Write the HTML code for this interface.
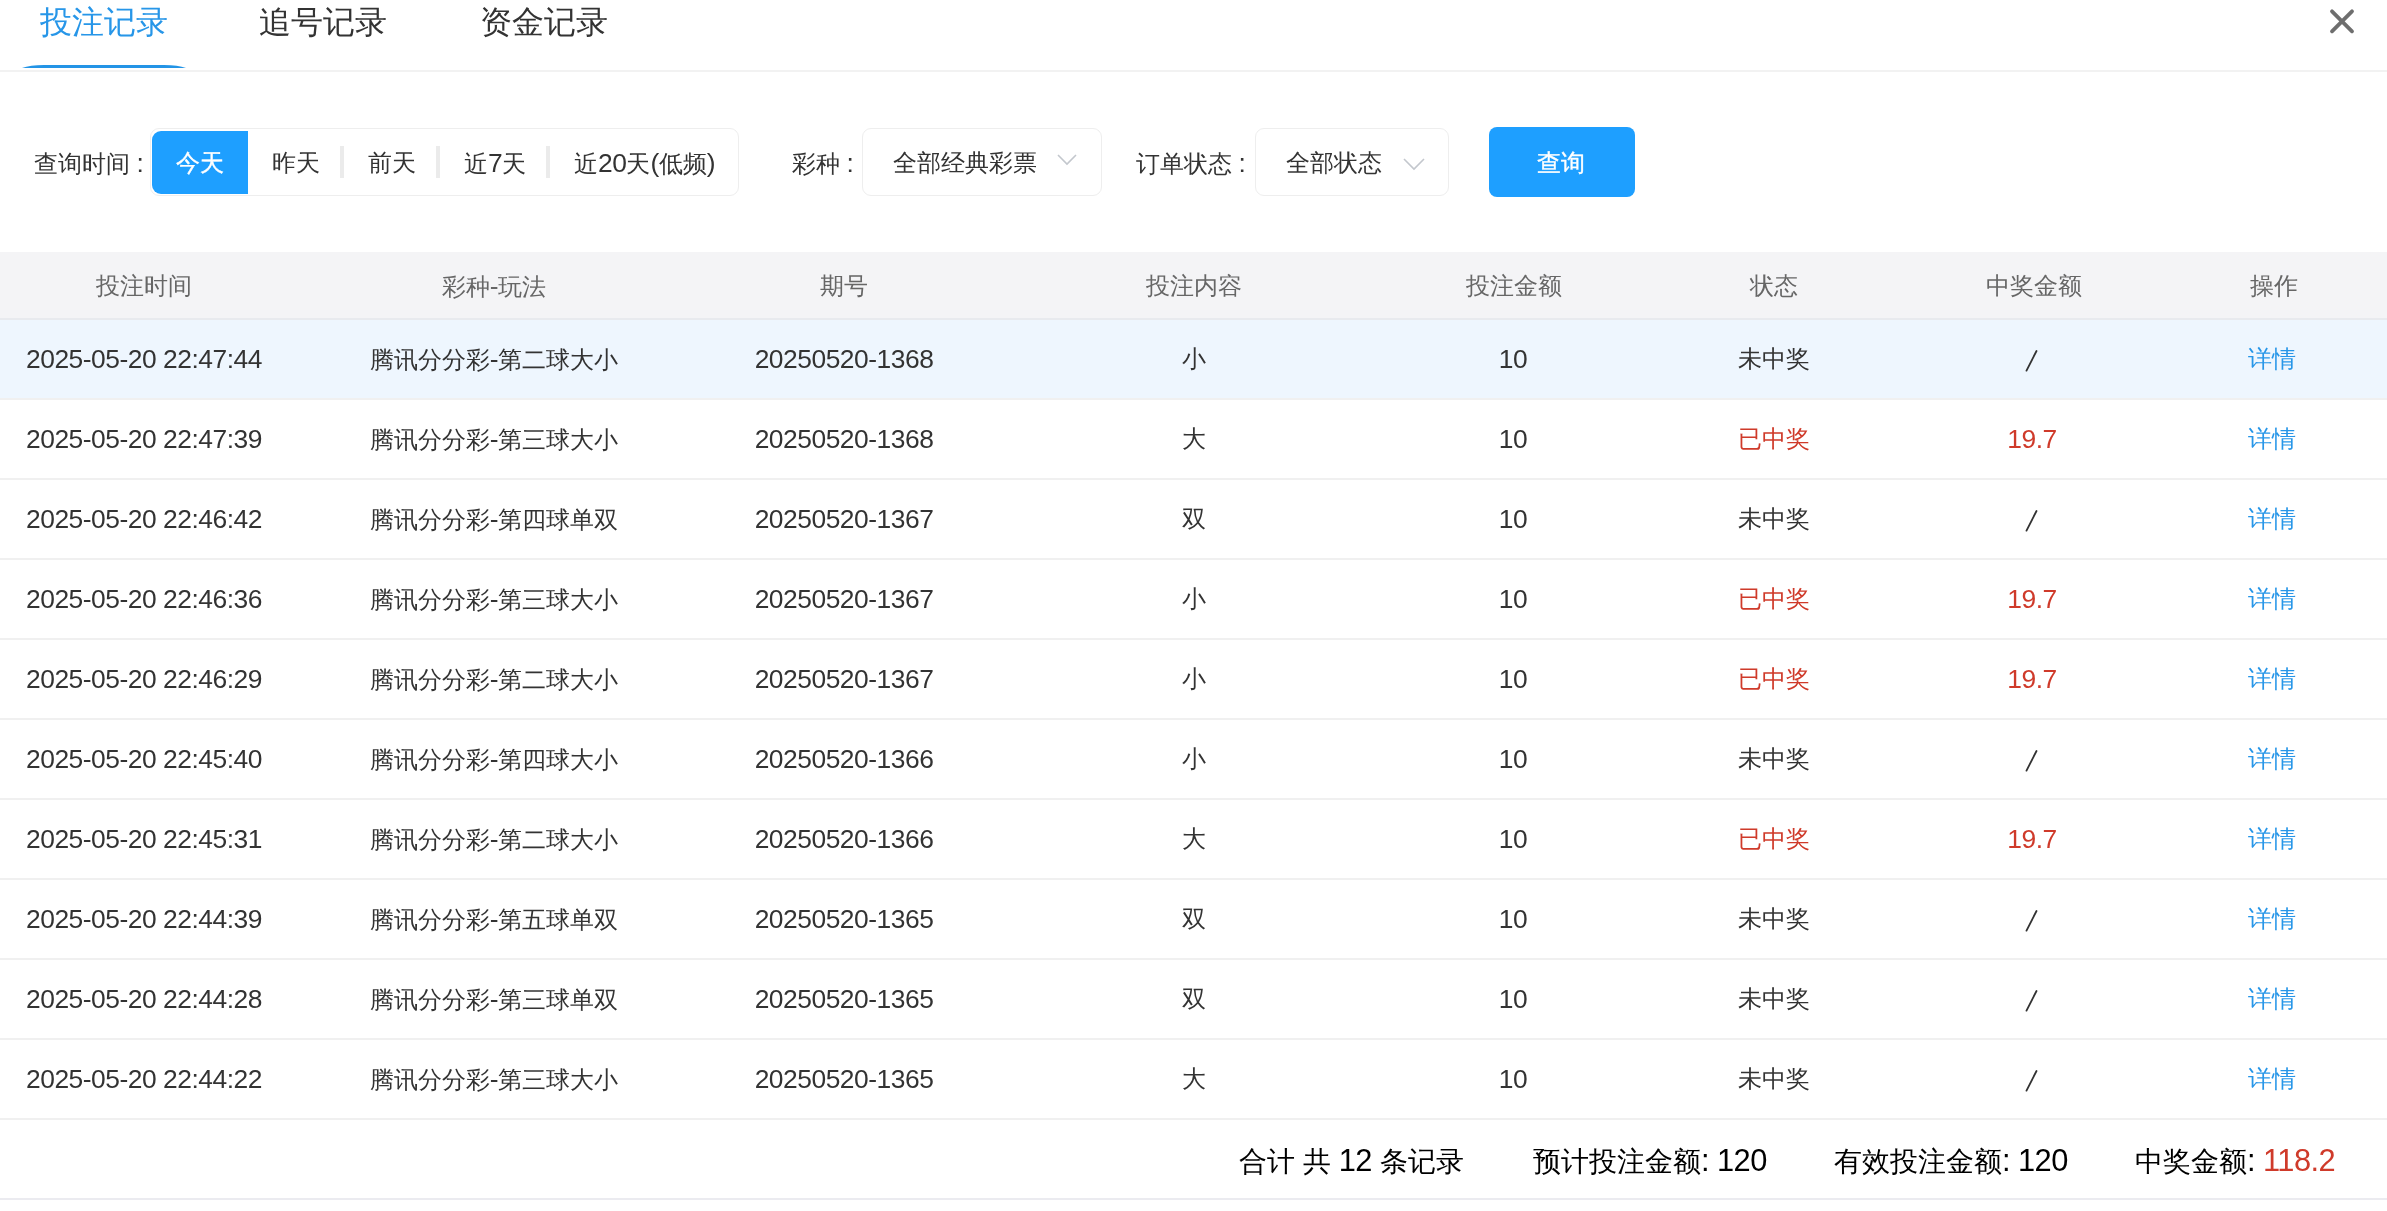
<!DOCTYPE html>
<html><head><meta charset="utf-8">
<style>
*{margin:0;padding:0;box-sizing:border-box}
html,body{width:2387px;height:1211px;overflow:hidden;background:#fff}
body{font-family:"Liberation Sans",sans-serif;color:#333;position:relative;will-change:transform}
.a{position:absolute;white-space:nowrap}
.n{font-size:1.1em;letter-spacing:-0.018em}
.tab{font-size:32px;line-height:40px;top:2px}
.lbl{font-size:24px;line-height:30px;top:148px;color:#333}
.box{position:absolute;border:1px solid #eeeeee;border-radius:9px;background:#fff}
.sep{position:absolute;width:4px;top:146px;height:32px;background:#ebebeb}
.hline{position:absolute;left:0;width:2387px;height:2px}
.c{position:absolute;width:400px;text-align:center;font-size:24px;line-height:30px;white-space:nowrap}
.th{color:#666}
.red{color:#cf3a2a}
.blue{color:#2796e8}
.ft{font-size:28px;line-height:34px;color:#000;top:1144px}
</style></head><body>
<div class="a tab" style="left:40px;color:#2796e8">投注记录</div>
<div class="a tab" style="left:259px">追号记录</div>
<div class="a tab" style="left:480px">资金记录</div>
<svg class="a" style="left:0;top:0" width="2387" height="80">
  <path d="M22 68 Q30 65 44 65 L164 65 Q178 65 186 68 Z" fill="#2394e6"/>
  <rect x="0" y="70" width="2387" height="2" fill="#f2f2f2"/>
  <path d="M2332 11.3 L2352 31.3 M2352 11.3 L2332 31.3" stroke="#6e6e6e" stroke-width="3.8" stroke-linecap="round"/>
</svg>
<div class="a lbl" style="left:34px">查询时间<span class="n" style="margin-left:6.5px">:</span></div>
<div class="box" style="left:150px;top:128px;width:589px;height:68px"></div>
<div class="a" style="left:152px;top:131px;width:96px;height:63px;background:#1e9fff;border-radius:9px 0 0 9px"></div>
<div class="a lbl" style="left:176px;color:#fff;-webkit-text-stroke:0.35px #fff">今天</div>
<div class="a lbl" style="left:272px">昨天</div>
<div class="sep" style="left:340px"></div>
<div class="a lbl" style="left:368px">前天</div>
<div class="sep" style="left:436px"></div>
<div class="a lbl" style="left:464px">近<span class="n">7</span>天</div>
<div class="sep" style="left:546px"></div>
<div class="a lbl" style="left:574px">近<span class="n">20</span>天<span class="n">(</span>低频<span class="n">)</span></div>
<div class="a lbl" style="left:792px">彩种<span class="n" style="margin-left:6.5px">:</span></div>
<div class="box" style="left:862px;top:128px;width:240px;height:68px"></div>
<div class="a lbl" style="left:893px">全部经典彩票</div>
<svg class="a" style="left:1056px;top:153px" width="22" height="14"><path d="M2 2 L11 11 L20 2" fill="none" stroke="#c3c7cd" stroke-width="1.6"/></svg>
<div class="a lbl" style="left:1136px">订单状态<span class="n" style="margin-left:6.5px">:</span></div>
<div class="box" style="left:1255px;top:128px;width:194px;height:68px"></div>
<div class="a lbl" style="left:1286px">全部状态</div>
<svg class="a" style="left:1402px;top:157px" width="24" height="15"><path d="M2 2 L12 12 L22 2" fill="none" stroke="#c3c7cd" stroke-width="1.6"/></svg>
<div class="a" style="left:1489px;top:127px;width:146px;height:70px;background:#1e9fff;border-radius:8px"></div>
<div class="a lbl" style="left:1537px;color:#fff;-webkit-text-stroke:0.35px #fff">查询</div>
<div class="a" style="left:0;top:252px;width:2387px;height:66px;background:#f4f4f6"></div>
<div class="hline" style="top:318px;background:#e8eaee"></div>
<div class="a" style="left:0;top:320px;width:2387px;height:78px;background:#eef6fe"></div>
<div class="c th" style="left:-56px;top:271px">投注时间</div>
<div class="c th" style="left:294px;top:271px">彩种<span class="n">-</span>玩法</div>
<div class="c th" style="left:644px;top:271px">期号</div>
<div class="c th" style="left:994px;top:271px">投注内容</div>
<div class="c th" style="left:1314px;top:271px">投注金额</div>
<div class="c th" style="left:1574px;top:271px">状态</div>
<div class="c th" style="left:1834px;top:271px">中奖金额</div>
<div class="c th" style="left:2074px;top:271px">操作</div>
<div class="c " style="left:-56px;top:344px"><span class="n">2025-05-20 22:47:44</span></div>
<div class="c " style="left:294px;top:344px">腾讯分分彩<span class="n">-</span>第二球大小</div>
<div class="c " style="left:644px;top:344px"><span class="n">20250520-1368</span></div>
<div class="c " style="left:994px;top:344px">小</div>
<div class="c " style="left:1313px;top:344px"><span class="n">10</span></div>
<div class="c " style="left:1574px;top:344px">未中奖</div>
<svg class="a" style="left:2020px;top:344px" width="24" height="30"><path d="M6.5 26.6 L16.5 7" stroke="#333" stroke-width="1.8" stroke-linecap="round"/></svg>
<div class="c blue" style="left:2072px;top:344px">详情</div>
<div class="hline" style="top:398px;background:#f0f0f0"></div>
<div class="c " style="left:-56px;top:424px"><span class="n">2025-05-20 22:47:39</span></div>
<div class="c " style="left:294px;top:424px">腾讯分分彩<span class="n">-</span>第三球大小</div>
<div class="c " style="left:644px;top:424px"><span class="n">20250520-1368</span></div>
<div class="c " style="left:994px;top:424px">大</div>
<div class="c " style="left:1313px;top:424px"><span class="n">10</span></div>
<div class="c red" style="left:1574px;top:424px">已中奖</div>
<div class="c red" style="left:1832px;top:424px"><span class="n">19.7</span></div>
<div class="c blue" style="left:2072px;top:424px">详情</div>
<div class="hline" style="top:478px;background:#f0f0f0"></div>
<div class="c " style="left:-56px;top:504px"><span class="n">2025-05-20 22:46:42</span></div>
<div class="c " style="left:294px;top:504px">腾讯分分彩<span class="n">-</span>第四球单双</div>
<div class="c " style="left:644px;top:504px"><span class="n">20250520-1367</span></div>
<div class="c " style="left:994px;top:504px">双</div>
<div class="c " style="left:1313px;top:504px"><span class="n">10</span></div>
<div class="c " style="left:1574px;top:504px">未中奖</div>
<svg class="a" style="left:2020px;top:504px" width="24" height="30"><path d="M6.5 26.6 L16.5 7" stroke="#333" stroke-width="1.8" stroke-linecap="round"/></svg>
<div class="c blue" style="left:2072px;top:504px">详情</div>
<div class="hline" style="top:558px;background:#f0f0f0"></div>
<div class="c " style="left:-56px;top:584px"><span class="n">2025-05-20 22:46:36</span></div>
<div class="c " style="left:294px;top:584px">腾讯分分彩<span class="n">-</span>第三球大小</div>
<div class="c " style="left:644px;top:584px"><span class="n">20250520-1367</span></div>
<div class="c " style="left:994px;top:584px">小</div>
<div class="c " style="left:1313px;top:584px"><span class="n">10</span></div>
<div class="c red" style="left:1574px;top:584px">已中奖</div>
<div class="c red" style="left:1832px;top:584px"><span class="n">19.7</span></div>
<div class="c blue" style="left:2072px;top:584px">详情</div>
<div class="hline" style="top:638px;background:#f0f0f0"></div>
<div class="c " style="left:-56px;top:664px"><span class="n">2025-05-20 22:46:29</span></div>
<div class="c " style="left:294px;top:664px">腾讯分分彩<span class="n">-</span>第二球大小</div>
<div class="c " style="left:644px;top:664px"><span class="n">20250520-1367</span></div>
<div class="c " style="left:994px;top:664px">小</div>
<div class="c " style="left:1313px;top:664px"><span class="n">10</span></div>
<div class="c red" style="left:1574px;top:664px">已中奖</div>
<div class="c red" style="left:1832px;top:664px"><span class="n">19.7</span></div>
<div class="c blue" style="left:2072px;top:664px">详情</div>
<div class="hline" style="top:718px;background:#f0f0f0"></div>
<div class="c " style="left:-56px;top:744px"><span class="n">2025-05-20 22:45:40</span></div>
<div class="c " style="left:294px;top:744px">腾讯分分彩<span class="n">-</span>第四球大小</div>
<div class="c " style="left:644px;top:744px"><span class="n">20250520-1366</span></div>
<div class="c " style="left:994px;top:744px">小</div>
<div class="c " style="left:1313px;top:744px"><span class="n">10</span></div>
<div class="c " style="left:1574px;top:744px">未中奖</div>
<svg class="a" style="left:2020px;top:744px" width="24" height="30"><path d="M6.5 26.6 L16.5 7" stroke="#333" stroke-width="1.8" stroke-linecap="round"/></svg>
<div class="c blue" style="left:2072px;top:744px">详情</div>
<div class="hline" style="top:798px;background:#f0f0f0"></div>
<div class="c " style="left:-56px;top:824px"><span class="n">2025-05-20 22:45:31</span></div>
<div class="c " style="left:294px;top:824px">腾讯分分彩<span class="n">-</span>第二球大小</div>
<div class="c " style="left:644px;top:824px"><span class="n">20250520-1366</span></div>
<div class="c " style="left:994px;top:824px">大</div>
<div class="c " style="left:1313px;top:824px"><span class="n">10</span></div>
<div class="c red" style="left:1574px;top:824px">已中奖</div>
<div class="c red" style="left:1832px;top:824px"><span class="n">19.7</span></div>
<div class="c blue" style="left:2072px;top:824px">详情</div>
<div class="hline" style="top:878px;background:#f0f0f0"></div>
<div class="c " style="left:-56px;top:904px"><span class="n">2025-05-20 22:44:39</span></div>
<div class="c " style="left:294px;top:904px">腾讯分分彩<span class="n">-</span>第五球单双</div>
<div class="c " style="left:644px;top:904px"><span class="n">20250520-1365</span></div>
<div class="c " style="left:994px;top:904px">双</div>
<div class="c " style="left:1313px;top:904px"><span class="n">10</span></div>
<div class="c " style="left:1574px;top:904px">未中奖</div>
<svg class="a" style="left:2020px;top:904px" width="24" height="30"><path d="M6.5 26.6 L16.5 7" stroke="#333" stroke-width="1.8" stroke-linecap="round"/></svg>
<div class="c blue" style="left:2072px;top:904px">详情</div>
<div class="hline" style="top:958px;background:#f0f0f0"></div>
<div class="c " style="left:-56px;top:984px"><span class="n">2025-05-20 22:44:28</span></div>
<div class="c " style="left:294px;top:984px">腾讯分分彩<span class="n">-</span>第三球单双</div>
<div class="c " style="left:644px;top:984px"><span class="n">20250520-1365</span></div>
<div class="c " style="left:994px;top:984px">双</div>
<div class="c " style="left:1313px;top:984px"><span class="n">10</span></div>
<div class="c " style="left:1574px;top:984px">未中奖</div>
<svg class="a" style="left:2020px;top:984px" width="24" height="30"><path d="M6.5 26.6 L16.5 7" stroke="#333" stroke-width="1.8" stroke-linecap="round"/></svg>
<div class="c blue" style="left:2072px;top:984px">详情</div>
<div class="hline" style="top:1038px;background:#f0f0f0"></div>
<div class="c " style="left:-56px;top:1064px"><span class="n">2025-05-20 22:44:22</span></div>
<div class="c " style="left:294px;top:1064px">腾讯分分彩<span class="n">-</span>第三球大小</div>
<div class="c " style="left:644px;top:1064px"><span class="n">20250520-1365</span></div>
<div class="c " style="left:994px;top:1064px">大</div>
<div class="c " style="left:1313px;top:1064px"><span class="n">10</span></div>
<div class="c " style="left:1574px;top:1064px">未中奖</div>
<svg class="a" style="left:2020px;top:1064px" width="24" height="30"><path d="M6.5 26.6 L16.5 7" stroke="#333" stroke-width="1.8" stroke-linecap="round"/></svg>
<div class="c blue" style="left:2072px;top:1064px">详情</div>
<div class="hline" style="top:1118px;background:#f0f0f0"></div>
<div class="hline" style="top:1198px;background:#ebebf0"></div>
<div class="a ft" style="left:1239px">合计 共<span class="n"> 12 </span>条记录</div>
<div class="a ft" style="left:1533px">预计投注金额<span class="n">: 120</span></div>
<div class="a ft" style="left:1834px">有效投注金额<span class="n">: 120</span></div>
<div class="a ft" style="left:2135px">中奖金额<span class="n">: </span><span class="n red">118.2</span></div>
</body></html>
